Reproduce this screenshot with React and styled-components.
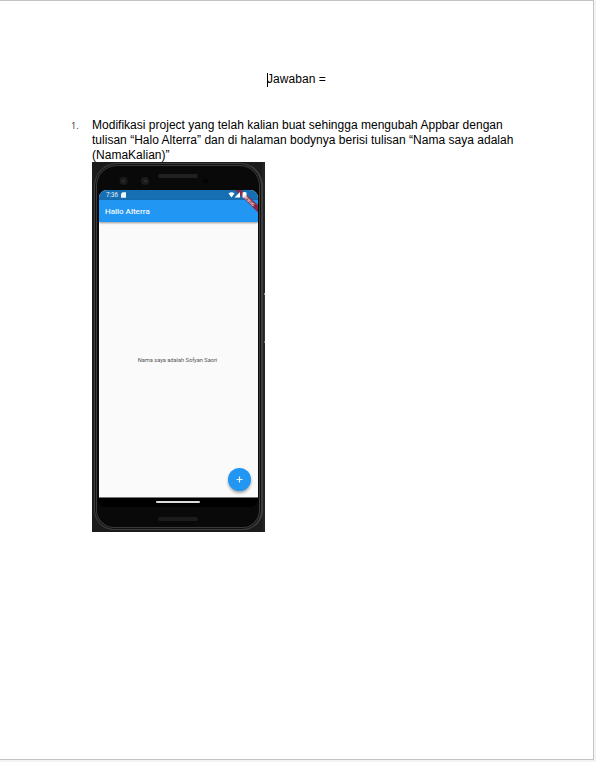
import React from "react";
import styled, { createGlobalStyle } from "styled-components";

const GlobalStyle = createGlobalStyle`
  * { box-sizing: border-box; }
  body { margin: 0; background: #f3f3f3; overflow: hidden; }
`;

const Page = styled.main`
  width: 594px;
  height: 760px;
  padding: 71px 0 0 71px;
  background: #fff;
  border: solid #c4c4c4;
  border-width: 1px 1px 1px 0;
  font-family: "Liberation Sans", Arial, sans-serif;
  font-size: 12px;
  line-height: 15px;
  color: #000;
`;

const Heading = styled.h1`
  display: flex;
  align-items: center;
  width: max-content;
  height: 15px;
  margin: 0 0 31px 196px;
  font-size: 12px;
  font-weight: 400;
  letter-spacing: 0.05px;
`;

const Caret = styled.span`
  width: 1px;
  height: 14px;
  margin-right: -1px;
  background: #000;
`;

const Question = styled.section`
  display: grid;
  grid-template-columns: 21px 430px;
`;

const Marker = styled.span`
  color: #333;
  font-family: "Open Sans", sans-serif;
  font-size: 9px;
  line-height: 16px;
`;

const Line = styled.div`
  height: 15px;
  white-space: nowrap;
  letter-spacing: 0.015px;
`;

const Photo = styled.figure`
  width: 173px;
  height: 370px;
  margin: -1px 0 0;
  padding: 1px 2px;
  overflow: hidden;
  background:
    linear-gradient(#999 0 2px, #333 2px 48px, #777 48px) 172px 131px / 1px 50px no-repeat,
    linear-gradient(90deg, #1b1b1b 0 170px, #202323 170px);
`;

const Body = styled.div`
  display: flex;
  flex-direction: column;
  width: 169px;
  height: 367px;
  padding: 0 3px;
  border: 1px solid #3e3e3e;
  border-right-width: 2px;
  border-radius: 23px 23px 20px 20px;
  background: #090909;
  box-shadow: inset 0 0 0 1px #111, inset 0 0 0 2px #3a3a3a;
`;

const Top = styled.div`
  height: 26px;
  flex: none;
  svg { display: block; }
`;

const Screen = styled.div`
  display: flex;
  flex-direction: column;
  position: relative;
  width: 159px;
  height: 308px;
  flex: none;
  margin-left: 1px;
  overflow: hidden;
  border-radius: 8px 8px 0 0;
  background: #fafafa;
  border-bottom: 1px solid #777;
  font-family: Roboto, sans-serif;
`;

const StatusBar = styled.div`
  display: flex;
  align-items: center;
  height: 10px;
  padding-left: 7px;
  gap: 3px;
  flex: none;
  background: #166fb3;
  color: #e4f1fb;
  font-size: 6.3px;
  line-height: 10px;
`;

const StatusOverlay = styled.svg`
  position: absolute;
  top: 0;
  right: 0;
`;

const AppBar = styled.header`
  height: 22px;
  flex: none;
  padding-left: 6px;
  background: #2196f3;
  box-shadow: 0 1px 2px #0006;
  color: #f2f8fe;
  font-size: 8px;
  font-weight: 500;
  line-height: 23px;
`;

const Content = styled.div`
  display: flex;
  flex: 1;
  align-items: center;
  justify-content: center;
  padding-right: 2px;
  color: #555;
  font-size: 5.65px;
  line-height: 8px;
  white-space: nowrap;
`;

const AddButton = styled.button`
  position: absolute;
  right: 7px;
  bottom: 6px;
  display: grid;
  place-items: center;
  width: 23px;
  height: 23px;
  padding: 0;
  border: 0;
  border-radius: 50%;
  background: #2196f3;
  box-shadow: 0 2px 3px #0005;
`;

const Navigation = styled.div`
  display: flex;
  justify-content: center;
  height: 9px;
  flex: none;
  padding-top: 3px;
  border-radius: 0 0 8px 8px;
  background: #000;
`;

const HomeBar = styled.div`
  width: 44px;
  height: 2px;
  border-radius: 1px;
  background: #dcdcdc;
`;

const Speaker = styled.div`
  width: 40px;
  height: 4px;
  margin: 10px auto 0 60px;
  border-radius: 2px;
  background: #1b1b1b;
`;

function Phone() {
  return (
    <Photo>
      <Body>
        <Top>
          <svg width="158" height="26">
            <circle cx="25.500" cy="17" r="4" fill="#1b1b1b" />
            <circle cx="25.500" cy="17" r="1.500" fill="#2c2c2c" />
            <circle cx="47" cy="17" r="4" fill="#1b1b1b" />
            <circle cx="47.500" cy="17" r="1.500" fill="#2c2c2c" />
            <rect x="60" y="10" width="40" height="4" rx="2" fill="#202020" />
            <circle cx="107.500" cy="17" r="2.500" fill="#030303" />
          </svg>
        </Top>
        <Screen>
          <StatusBar>
            <span>7:36</span>
            <svg width="5" height="6" viewBox="0 0 5 6">
              <path d="M1.500 .3H5V5.700H0V1.800Z" fill="#eef6fc" />
            </svg>
          </StatusBar>
          <AppBar>Hallo Alterra</AppBar>
          <Content>Nama saya adalah Sofyan Saori</Content>
          <StatusOverlay width="32" height="24" viewBox="0 0 32 24">
            <path d="M9 0H15L32 15V22.500Z" fill="#862b47" />
            <path d="M2.500 3.500Q5.500 1.200 8.500 3.500L5.500 7.500Z M14 2V7.500H8.500Z" fill="#fff" />
            <path d="M16.500 2.500H17.500V2H19.500V2.500H20.500V7.500H16.500Z" fill="#fff" />
            <text x="23" y="12.300" transform="rotate(43 23 10.700)" textAnchor="middle" fill="#ecd5dc" fontSize="4.300" fontWeight="700">DEBUG</text>
          </StatusOverlay>
          <AddButton aria-label="Add">
            <svg width="7" height="7" viewBox="0 0 7 7">
              <path d="M3.500 .5V6.500M.5 3.500H6.500" stroke="#e8f4fe" strokeWidth="1.200" />
            </svg>
          </AddButton>
        </Screen>
        <Navigation><HomeBar /></Navigation>
        <Speaker />
      </Body>
    </Photo>
  );
}

export default function App() {
  return (
    <>
      <GlobalStyle />
      <Page>
        <Heading><Caret />Jawaban =</Heading>
        <Question>
          <Marker>1.</Marker>
          <div>
            <Line>Modifikasi project yang telah kalian buat sehingga mengubah Appbar dengan</Line>
            <Line>tulisan “Halo Alterra” dan di halaman bodynya berisi tulisan “Nama saya adalah</Line>
            <Line>(NamaKalian)”</Line>
            <Phone />
          </div>
        </Question>
      </Page>
    </>
  );
}
